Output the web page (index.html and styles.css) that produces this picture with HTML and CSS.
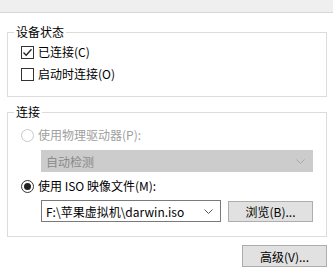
FILE: index.html
```html
<!DOCTYPE html>
<html lang="zh-CN">
<head>
    <meta charset="UTF-8">
    <title>CD/DVD</title>
    <link rel="stylesheet" href="styles.css">
</head>
<body>
    <div class="topbar"></div>

    <div class="page">
        <fieldset class="group group-status">
            <legend>设备状态</legend>
            <label class="option">
                <span class="check checked">
                    <svg width="11" height="11" viewBox="0 0 11 11"><path d="M1.5 5.5 L4.2 8.3 L9.5 2.2" fill="none" stroke="#222" stroke-width="1.3"/></svg>
                </span>
                已连接(C)
            </label>
            <label class="option">
                <span class="check"></span>
                启动时连接(O)
            </label>
        </fieldset>

        <fieldset class="group group-conn">
            <legend>连接</legend>
            <label class="option disabled">
                <span class="radio"></span>
                使用物理驱动器(P):
            </label>
            <div class="select select-disabled">
                <span>自动检测</span>
                <svg class="chev" width="9" height="5" viewBox="0 0 9 5"><path d="M0.5 0.5 L4.5 4.5 L8.5 0.5" fill="none" stroke="#a8a8a8" stroke-width="1"/></svg>
            </div>
            <label class="option option-iso">
                <span class="radio on"><span class="dot"></span></span>
                使用 ISO 映像文件(M):
            </label>
            <div class="file-row">
                <div class="select select-file">
                    <span>F:\苹果虚拟机\darwin.iso</span>
                    <svg class="chev" width="9" height="5" viewBox="0 0 9 5"><path d="M0.5 0.5 L4.5 4.5 L8.5 0.5" fill="none" stroke="#555" stroke-width="1"/></svg>
                </div>
                <button class="btn btn-browse">浏览(B)...</button>
            </div>
        </fieldset>

        <div class="actions">
            <button class="btn btn-adv">高级(V)...</button>
        </div>
    </div>
</body>
</html>
```

FILE: styles.css
```css
body {
    margin: 0;
    background: #ffffff;
    font-family: "Noto Sans CJK SC", "Microsoft YaHei", sans-serif;
    font-size: 12px;
    color: #000;
}
.topbar {
    height: 12px;
    background: #efefef;
    border-bottom: 1px solid #d6d6d6;
}
.page {
    padding: 11px 6px 0 7px;
}
.group {
    margin: 0;
    padding: 0 0 0 13px;
    border: 1px solid #dcdcdc;
    min-width: 0;
}
.group legend {
    padding: 0 2px;
    margin-left: -7px;
    line-height: 16px;
}
.group-status {
    padding-top: 1px;
    padding-bottom: 11px;
}
.group-conn {
    margin-top: 7px;
    padding-top: 4px;
    padding-bottom: 14px;
}
.option {
    display: flex;
    align-items: center;
    height: 22px;
    line-height: 16px;
}
.option.disabled {
    color: #a0a0a0;
}
.option-iso {
    margin-top: 3px;
}
.check {
    width: 11px;
    height: 11px;
    border: 1px solid #333;
    margin-right: 4px;
    display: flex;
    align-items: center;
    justify-content: center;
    background: #fff;
}
.check svg {
    display: block;
}
.radio {
    width: 11px;
    height: 11px;
    border: 1px solid #333;
    border-radius: 50%;
    margin-right: 4px;
    display: flex;
    align-items: center;
    justify-content: center;
}
.disabled .radio {
    border-color: #c8c8c8;
}
.radio .dot {
    width: 7px;
    height: 7px;
    border-radius: 50%;
    background: #222;
}
.select {
    display: flex;
    align-items: center;
    justify-content: space-between;
    height: 22px;
    box-sizing: border-box;
    padding: 0 7px 0 4px;
    margin-left: 20px;
}
.select-disabled {
    width: 272px;
    background: #cccccc;
    border: 1px solid #cccccc;
    color: #8a8a8a;
    margin-top: 4px;
}
.file-row {
    display: flex;
    align-items: center;
    margin-top: 3px;
}
.select-file {
    width: 180px;
    background: #fff;
    border: 1px solid #7a7a7a;
}
.btn {
    font-family: inherit;
    font-size: 12px;
    color: #000;
    background: #e1e1e1;
    border: 1px solid #adadad;
    height: 21px;
    padding: 0;
    box-sizing: border-box;
}
.btn-browse {
    width: 85px;
    margin-left: 7px;
}
.actions {
    display: flex;
    justify-content: flex-end;
    margin-top: 8px;
}
.btn-adv {
    width: 85px;
    height: 22px;
}
```
